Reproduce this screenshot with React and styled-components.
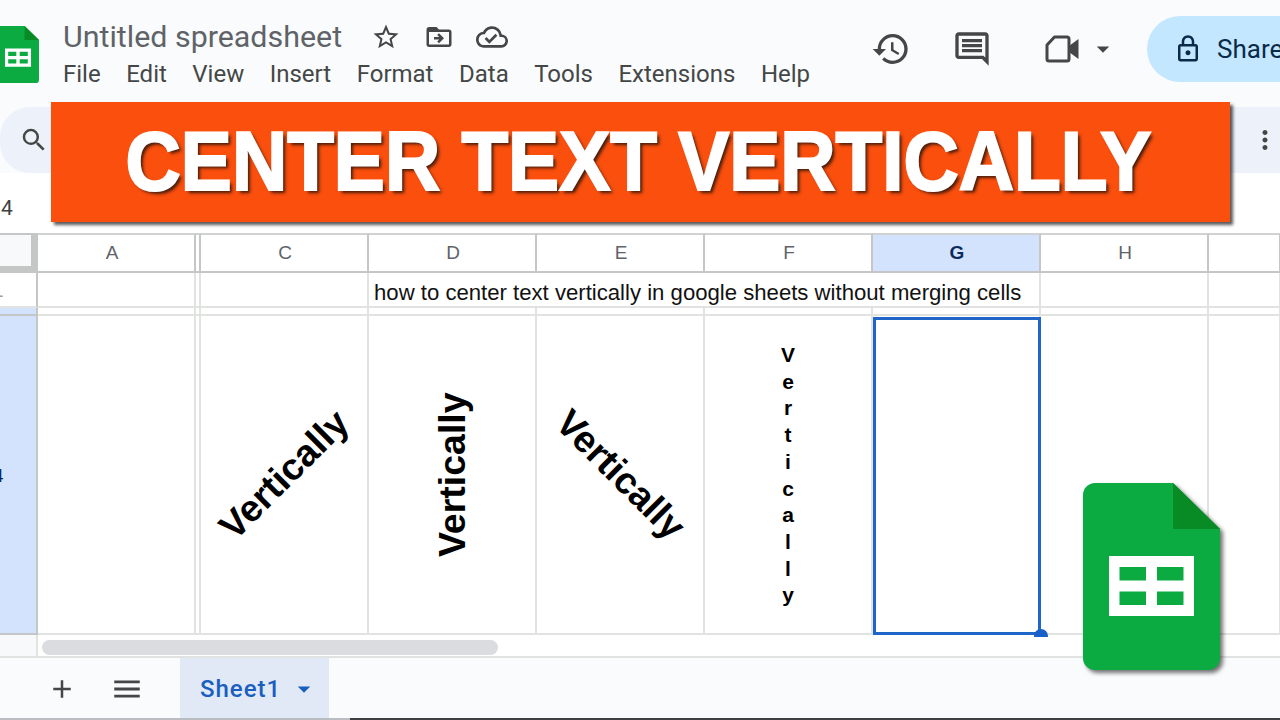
import React from "react";
import styled, { createGlobalStyle } from "styled-components";
import {
  MdStarBorder, MdDriveFileMoveOutline, MdOutlineCloudDone, MdHistory, MdOutlineComment,
  MdOutlineLock, MdSearch, MdMoreVert, MdAdd, MdMenu, MdArrowDropDown,
} from "react-icons/md";

const Global = createGlobalStyle`
  html, body { margin: 0; padding: 0; background: #fff; }
  * { box-sizing: border-box; }
`;

const COLS = "38px 158px 5px 168px 168px 168px 168px 168px 168px 72px";

const Page = styled.div`
  position: relative;
  width: 1280px;
  height: 720px;
  overflow: hidden;
  display: flex;
  flex-direction: column;
  background: #fff;
  font-family: Roboto, "Liberation Sans", sans-serif;
`;

const Header = styled.header`
  height: 107px;
  flex: none;
  display: flex;
  align-items: flex-start;
  background: #f9fbfd;
`;
const LogoSlot = styled.div`
  flex: none;
  width: 66px;
  margin-left: -3px;
  padding-top: 26px;
`;
const TitleCol = styled.div`
  flex: none;
  width: 808px;
  padding-top: 18px;
`;
const TitleRow = styled.div`
  display: flex;
  align-items: center;
  height: 38px;
`;
const DocTitle = styled.span`
  font-size: 30.4px;
  line-height: 38px;
  color: #5f6368;
  width: 308px;
  white-space: nowrap;
`;
const TitleIcons = styled.div`
  display: flex;
  align-items: center;
  gap: 22.500px;
`;
const Icon = styled.span`
  display: inline-flex;
  flex: none;
  font-size: ${(p) => p.$size}px;
  color: ${(p) => p.$color || "#444746"};
`;
const Menu = styled.nav`
  display: flex;
  gap: 25.500px;
  margin-top: 4px;
  font-size: 24px;
  line-height: 28px;
  color: #444746;
`;
const Actions = styled.div`
  display: flex;
  align-items: center;
  height: 66px;
  margin-top: 16px;
`;
const CommentSlot = styled.div`
  display: flex;
  margin-left: 41px;
`;
const VideoGroup = styled.div`
  display: flex;
  align-items: center;
  gap: 8px;
  margin-left: 53px;
`;
const ShareButton = styled.div`
  flex: none;
  width: 200px;
  height: 66px;
  margin-left: 29px;
  padding-left: 26px;
  display: flex;
  align-items: center;
  gap: 14px;
  border-radius: 33px;
  background: #c2e7ff;
  color: #0b2a4a;
  font-size: 26px;
`;

const ToolbarEdge = styled.div`
  height: 66px;
  flex: none;
  background: #f9fbfd;
`;
const Toolbar = styled.div`
  height: 66px;
  display: flex;
  align-items: center;
  justify-content: space-between;
  padding: 0 0 0 19px;
  background: #edf2fa;
  border-radius: 30px 0 0 30px;
`;

const FormulaBar = styled.div`
  height: 60px;
  flex: none;
  display: flex;
  align-items: center;
  padding: 10px 0 0 1px;
  font-size: 21px;
  color: #3c4043;
  background: #fff;
`;

const Row = styled.div`
  display: grid;
  grid-template-columns: ${COLS};
  height: ${(p) => p.$h}px;
  flex: none;
`;
const Corner = styled.div`
  background: #f8f9fa;
  border-right: 7px solid #c4c7c5;
  border-bottom: 7px solid #c4c7c5;
  border-top: 2px solid #c4c7c5;
`;
const ColHead = styled.div`
  display: flex;
  align-items: center;
  justify-content: center;
  padding-left: 2px;
  padding-right: ${(p) => p.$shift || 0}px;
  border-top: 2px solid #d0d2d2;
  border-right: 2px solid #c4c7c5;
  border-bottom: 2px solid #c4c7c5;
  font-family: "Liberation Sans", Arial, sans-serif;
  font-size: 19px;
  font-weight: ${(p) => (p.$active ? 700 : 400)};
  color: ${(p) => (p.$active ? "#0b2a5c" : "#5f6368")};
  background: ${(p) => (p.$active ? "#d3e3fd" : "#fff")};
`;
const RowHead = styled.div`
  position: relative;
  display: flex;
  align-items: center;
  overflow: hidden;
  padding-top: 3px;
  font-family: "Liberation Sans", Arial, sans-serif;
  font-size: 19px;
  border-right: 2px solid #c4c7c5;
  border-bottom: 2px solid ${(p) => (p.$active ? "#c4c7c5" : "#e1e3e1")};
  color: ${(p) => (p.$active ? "#0b2a5c" : "#9aa0a6")};
  background: ${(p) => (p.$active ? "#d3e3fd" : "#fff")};
`;
const RowNumber = styled.span`
  margin-left: -7px;
`;
const Cell = styled.div`
  position: relative;
  display: flex;
  align-items: center;
  justify-content: center;
  min-width: 0;
  grid-column: ${(p) => (p.$span ? `span ${p.$span}` : "auto")};
  border-right: 2px solid #e1e3e1;
  border-bottom: 2px solid #e1e3e1;
  color: #000;
  font-family: "Liberation Sans", Arial, sans-serif;
`;
const Sentence = styled.span`
  width: 100%;
  padding: 6px 0 0 5px;
  font-size: 22.150px;
  white-space: nowrap;
  color: #111;
`;
const Rotated = styled.span`
  display: block;
  font-size: 37.500px;
  font-weight: 700;
  line-height: 1;
  white-space: nowrap;
  transform: rotate(${(p) => p.$angle}deg);
`;
const Stacked = styled.div`
  display: flex;
  flex-direction: column;
  align-items: center;
  margin-top: 2px;
  font-size: 21px;
  font-weight: 700;
  line-height: 26.700px;
`;
const Selection = styled.div`
  position: absolute;
  inset: 1px -2px -2px 0;
  border: 3px solid #1f66c8;
  z-index: 1;
`;
const Handle = styled.span`
  position: absolute;
  right: -10px;
  bottom: -5px;
  width: 14px;
  height: 8px;
  border-radius: 7px 7px 0 0;
  background: #1a5fc8;
`;

const ScrollRow = styled.div`
  height: 23px;
  flex: none;
  display: flex;
  align-items: center;
  border-bottom: 2px solid #e1e3e1;
`;
const ScrollGutter = styled.div`
  width: 38px;
  height: 100%;
  background: #f8f9fa;
  border-right: 2px solid #e1e3e1;
`;
const ScrollThumb = styled.div`
  width: 456px;
  height: 15px;
  margin: 4px 0 0 4px;
  border-radius: 8px;
  background: #dadce0;
`;

const TabBar = styled.div`
  position: relative;
  flex: 1;
  display: flex;
  align-items: stretch;
  background: #f9fbfd;
`;
const TabTools = styled.div`
  width: 180px;
  padding-left: 47px;
  display: flex;
  align-items: center;
  gap: 33px;
`;
const Tab = styled.div`
  width: 149px;
  padding-left: 20px;
  display: flex;
  align-items: center;
  gap: 8px;
  background: #e1e9f7;
  color: #1a5fc0;
  font-size: 24px;
  font-weight: 500;
  letter-spacing: 1px;
`;
const BottomEdge = styled.div`
  position: absolute;
  left: 0;
  right: 0;
  bottom: 0;
  height: 2px;
  background: linear-gradient(to right, #b9bcc0 350px, #3c4043 350px);
`;

const Banner = styled.div`
  position: absolute;
  left: 51px;
  top: 102px;
  width: 1179px;
  height: 120px;
  display: flex;
  align-items: center;
  justify-content: center;
  padding-right: 4px;
  background: #fb4f0e;
  box-shadow: 3px 3px 3px rgba(0, 0, 0, 0.65);
  z-index: 3;
`;
const BannerText = styled.h1`
  margin: 0;
  font-family: "Liberation Sans", Arial, sans-serif;
  font-size: 76.500px;
  line-height: 1;
  font-weight: 700;
  white-space: nowrap;
  color: #fff;
  -webkit-text-stroke: 2px #fff;
  text-shadow: 3px 3px 3px rgba(40, 20, 10, 0.85);
  transform: scaleY(1.08);
`;
const BigLogo = styled.div`
  position: absolute;
  left: 1083px;
  top: 483px;
  z-index: 2;
  filter: drop-shadow(3px 3px 2px rgba(0, 0, 0, 0.55));
`;

const SheetsLogo = ({ width }) => (
  <svg width={width} viewBox="0 0 137 187" style={{ display: "block" }}>
    <path d="M12 0H90L137 46V175a12 12 0 0 1-12 12H12a12 12 0 0 1-12-12V12A12 12 0 0 1 12 0Z" fill="#0bab42" />
    <path d="M90 0L137 46H90Z" fill="#088a24" />
    <path
      fillRule="evenodd"
      d="M26 73H111V133H26ZM36.500 84V97.500H63V84ZM74 84V97.500H100.500V84ZM36.500 108.500V122H63V108.500ZM74 108.500V122H100.500V108.500Z"
      fill="#fff"
    />
  </svg>
);

const VideoIcon = () => (
  <svg width="35" height="28" viewBox="0 0 35 28" style={{ display: "block" }}>
    <path d="M9.500 2H22a2 2 0 0 1 2 2V24a2 2 0 0 1-2 2H4a2 2 0 0 1-2-2V10Z" fill="none" stroke="#444746" strokeWidth="3" strokeLinejoin="round" />
    <path d="M24 11L33.500 4V24L24 17Z" fill="#444746" />
  </svg>
);

const MENU = ["File", "Edit", "View", "Insert", "Format", "Data", "Tools", "Extensions", "Help"];
const COL_NAMES = ["C", "D", "E", "F", "G", "H"];
const LETTERS = "Vertically".split("");

export default function App() {
  return (
    <Page>
      <Global />
      <Header>
        <LogoSlot><SheetsLogo width={42} /></LogoSlot>
        <TitleCol>
          <TitleRow>
            <DocTitle>Untitled spreadsheet</DocTitle>
            <TitleIcons>
              <Icon $size={30}><MdStarBorder /></Icon>
              <Icon $size={30}><MdDriveFileMoveOutline /></Icon>
              <Icon $size={32}><MdOutlineCloudDone /></Icon>
            </TitleIcons>
          </TitleRow>
          <Menu>{MENU.map((m) => <span key={m}>{m}</span>)}</Menu>
        </TitleCol>
        <Actions>
          <Icon $size={40}><MdHistory /></Icon>
          <CommentSlot><Icon $size={40}><MdOutlineComment /></Icon></CommentSlot>
          <VideoGroup>
            <VideoIcon />
            <Icon $size={30}><MdArrowDropDown /></Icon>
          </VideoGroup>
          <ShareButton>
            <Icon $size={30} $color="#0b2a4a"><MdOutlineLock /></Icon>
            Share
          </ShareButton>
        </Actions>
      </Header>

      <ToolbarEdge>
        <Toolbar>
          <Icon $size={30}><MdSearch /></Icon>
          <Icon $size={30}><MdMoreVert /></Icon>
        </Toolbar>
      </ToolbarEdge>

      <FormulaBar>4</FormulaBar>

      <Row $h={40}>
        <Corner />
        <ColHead $shift={10}>A</ColHead>
        <ColHead />
        {COL_NAMES.map((c) => <ColHead key={c} $active={c === "G"}>{c}</ColHead>)}
        <ColHead />
      </Row>

      <Row $h={35}>
        <RowHead><RowNumber>1</RowNumber></RowHead>
        <Cell />
        <Cell />
        <Cell />
        <Cell $span={4}><Sentence>how to center text vertically in google sheets without merging cells</Sentence></Cell>
        <Cell />
        <Cell />
      </Row>
      <Row $h={8}>
        {Array.from({ length: 10 }, (_, i) => (i === 0 ? <RowHead key={i} $active /> : <Cell key={i} />))}
      </Row>

      <Row $h={319}>
        <RowHead $active><RowNumber>4</RowNumber></RowHead>
        <Cell />
        <Cell />
        <Cell><Rotated $angle={-45}>Vertically</Rotated></Cell>
        <Cell><Rotated $angle={-90}>Vertically</Rotated></Cell>
        <Cell><Rotated $angle={45}>Vertically</Rotated></Cell>
        <Cell>
          <Stacked>{LETTERS.map((l, i) => <span key={i}>{l}</span>)}</Stacked>
        </Cell>
        <Cell><Selection><Handle /></Selection></Cell>
        <Cell />
        <Cell />
      </Row>

      <ScrollRow>
        <ScrollGutter />
        <ScrollThumb />
      </ScrollRow>

      <TabBar>
        <TabTools>
          <Icon $size={30}><MdAdd /></Icon>
          <Icon $size={34}><MdMenu /></Icon>
        </TabTools>
        <Tab>
          Sheet1
          <Icon $size={30} $color="#1a5fc0"><MdArrowDropDown /></Icon>
        </Tab>
        <BottomEdge />
      </TabBar>

      <Banner><BannerText>CENTER TEXT VERTICALLY</BannerText></Banner>
      <BigLogo><SheetsLogo width={137} /></BigLogo>
    </Page>
  );
}
